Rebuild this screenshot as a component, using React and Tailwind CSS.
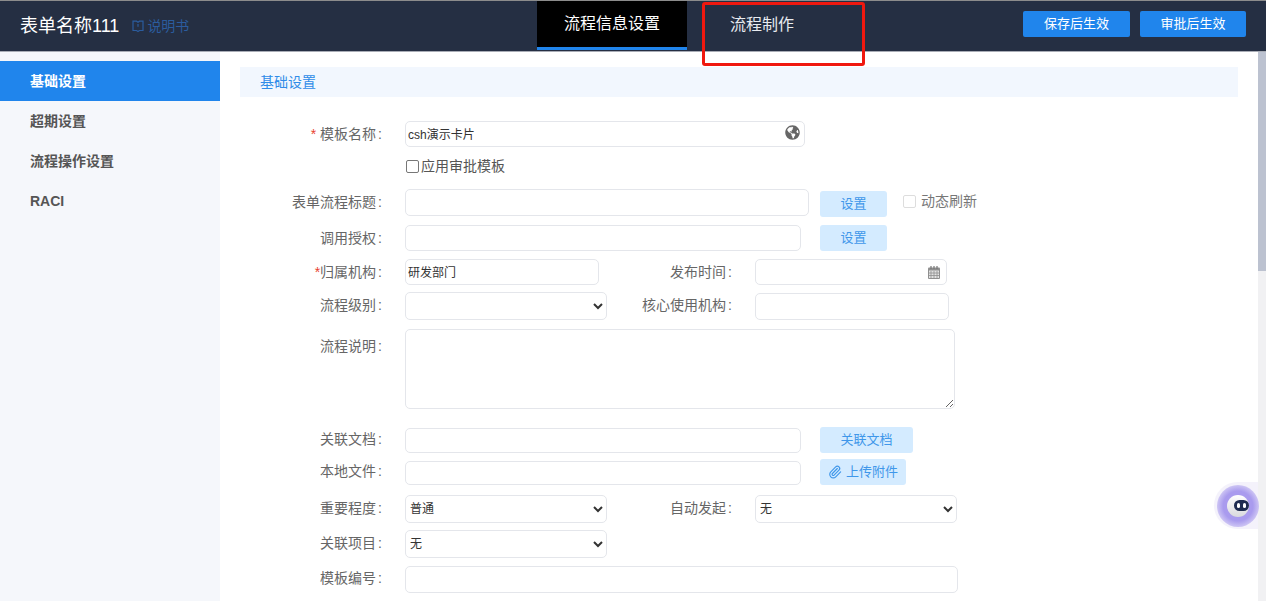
import { Paperclip } from "lucide-react";
import { FaGlobeAmericas } from "react-icons/fa";

const sideItems = ["基础设置", "超期设置", "流程操作设置", "RACI"];

const boxCls =
  "block rounded-[5px] border border-[#e4e6eb] bg-white text-xs text-[#333] outline-none";

function Label({ children, required, className = "w-[142px]" }) {
  return (
    <label className={`${className} shrink-0 text-right text-sm leading-[26px] text-[#666]`}>
      {required && <span className="mr-1 text-[#e8412f]">*</span>}
      {children}
      <span className="ml-[2px]">:</span>
    </label>
  );
}

function Field({ w, h = "h-[26px]", value = "" }) {
  return <input readOnly value={value} className={`${boxCls} ${w} ${h} px-[2px] pb-px`} />;
}

function Pick({ w, value = "" }) {
  return (
    <select defaultValue={value} className={`${boxCls} ${w} h-[28px] px-0`}>
      <option value={value}>{value}</option>
    </select>
  );
}

function LightBtn({ w, children }) {
  return (
    <button className={`${w} flex h-[26px] items-center justify-center gap-1 rounded-[3px] bg-[#d4ebff] text-[13px] text-[#3f97ea]`}>
      {children}
    </button>
  );
}

function BookIcon() {
  return (
    <svg width="14" height="14" viewBox="0 0 14 14" fill="none" stroke="#2b5c9e" strokeWidth="1.2">
      <path d="M2 2.2h3.5L7 3.2l1.5-1H12v9.3H8.5L7 12.5l-1.5-1H2z" />
      <path d="M7 5v2.8" />
    </svg>
  );
}

function CalendarIcon() {
  return (
    <svg width="12" height="13" viewBox="0 0 12 13" className="absolute right-[7px] top-[7px]">
      <rect x="0" y="1.5" width="12" height="11.5" rx="1" fill="#8f8f8f" />
      <rect x="1" y="4.5" width="10" height="7.5" fill="#e2e2e2" />
      <path d="M3 0v3M6 0v3M9 0v3" stroke="#777" strokeWidth="1.2" />
      <path d="M3 5v7M6 5v7M9 5v7M1 7h10M1 9.5h10" stroke="#8f8f8f" strokeWidth="0.8" />
    </svg>
  );
}

function Robot() {
  return (
    <div className="absolute left-[1214px] top-[482px] flex h-[47px] w-[44px] items-center rounded-l-full bg-[#f4f2fb]">
      <div className="ml-[3px] flex h-[42px] w-[42px] shrink-0 items-center justify-center rounded-full bg-[radial-gradient(circle,#a99bee_50%,#d5cef5_75%,#f0edfb_100%)]">
        <div className="flex h-[22px] w-[22px] items-center justify-end rounded-full bg-[linear-gradient(#ffffff,#d9d9de)]">
          <div className="flex h-[11px] w-[15px] items-center justify-center gap-[3px] rounded-full bg-[#1f2c50]">
            <span className="h-[5px] w-[3px] rounded-full bg-white" />
            <span className="h-[5px] w-[3px] rounded-full bg-white" />
          </div>
        </div>
      </div>
    </div>
  );
}

export default function App() {
  return (
    <div className="relative flex h-[601px] flex-col overflow-hidden bg-white font-['Liberation_Sans','Noto_Sans_CJK_SC',sans-serif]">
      <header className="flex h-[52px] shrink-0 border-y border-t-[#8c8c8c] border-b-[#a9adb6] bg-[#252f43]">
        <div className="flex w-[537px] shrink-0 items-center pl-5">
          <span className="text-lg text-white">表单名称111</span>
          <span className="ml-3 flex items-center gap-[2px] text-sm text-[#2b5c9e]">
            <BookIcon />
            说明书
          </span>
        </div>
        <div className="flex h-[49px] w-[150px] items-center justify-center border-b-[3px] border-[#2085ec] bg-black text-base text-white">
          流程信息设置
        </div>
        <div className="ml-[43px] flex h-[47px] items-center text-base text-[#e8ebf0]">流程制作</div>
        <div className="ml-auto flex gap-[10px] pr-5 pt-[10px]">
          <button className="h-[26px] w-[107px] rounded-[2px] bg-[#2085ec] text-[13px] text-white">保存后生效</button>
          <button className="h-[26px] w-[106px] rounded-[2px] bg-[#2085ec] text-[13px] text-white">审批后生效</button>
        </div>
      </header>

      <div className="flex min-h-0 flex-1">
        <aside className="w-[220px] shrink-0 bg-[#f5f7fb] pt-[9px]">
          {sideItems.map((item, i) => (
            <div
              key={item}
              className={`flex h-10 items-center pl-[30px] text-sm font-bold ${i === 0 ? "bg-[#2085ec] text-white" : "text-[#555]"}`}
            >
              {item}
            </div>
          ))}
        </aside>

        <main className="min-w-0 flex-1 overflow-hidden pl-5 pr-5 pt-[15px]">
          <div className="flex h-[30px] items-center bg-[#f2f7fe] pl-5 text-sm text-[#2f8ce8]">基础设置</div>

          <div className="mt-6 flex items-start gap-[23px]">
            <Label required>模板名称</Label>
            <div className="relative">
              <Field w="w-[400px]" value="csh演示卡片" />
              <FaGlobeAmericas className="absolute right-[5px] top-[4px] text-[15px] text-[#666]" />
            </div>
          </div>

          <div className="mt-[9px] flex h-[20px] items-center gap-[2px] pl-[166px] text-sm text-[#555]">
            <input type="checkbox" readOnly className="h-[13px] w-[13px] appearance-none rounded-[2px] border border-[#777]" />
            应用审批模板
          </div>

          <div className="mt-[13px] flex items-start gap-[23px]">
            <Label>表单流程标题</Label>
            <Field w="w-[404px]" h="h-[27px]" />
            <div className="ml-[-12px] mt-[2px]">
              <LightBtn w="w-[67px]">设置</LightBtn>
            </div>
            <div className="ml-[-7px] -mt-px flex h-[26px] items-center gap-[5px] text-sm text-[#777]">
              <input type="checkbox" readOnly className="h-[13px] w-[13px] appearance-none rounded-[2px] border border-[#ddd]" />
              动态刷新
            </div>
          </div>

          <div className="mt-[8px] flex items-start gap-[23px]">
            <Label>调用授权</Label>
            <Field w="w-[396px]" />
            <div className="ml-[-4px]">
              <LightBtn w="w-[67px]">设置</LightBtn>
            </div>
          </div>

          <div className="mt-[8px] flex items-start gap-[23px]">
            <Label>
              <span className="text-[#e8412f]">*</span>归属机构
            </Label>
            <Field w="w-[194px]" value="研发部门" />
            <Label className="w-[110px]">发布时间</Label>
            <div className="relative">
              <Field w="w-[192px]" />
              <CalendarIcon />
            </div>
          </div>

          <div className="mt-[7px] flex items-start gap-[23px]">
            <Label>流程级别</Label>
            <Pick w="w-[202px]" />
            <Label className="w-[102px]">核心使用机构</Label>
            <div className="mt-px">
              <Field w="w-[194px]" h="h-[27px]" />
            </div>
          </div>

          <div className="mt-[9px] flex items-start gap-[23px]">
            <Label className="w-[142px] pt-1">流程说明</Label>
            <textarea readOnly className={`${boxCls} h-[80px] w-[550px]`} />
          </div>

          <div className="mt-[19px] flex items-start gap-[23px]">
            <Label className="w-[142px] -mt-[2px]">关联文档</Label>
            <Field w="w-[396px]" h="h-[25px]" />
            <div className="ml-[-4px] -mt-px">
              <LightBtn w="w-[93px]">关联文档</LightBtn>
            </div>
          </div>

          <div className="mt-[8px] flex items-start gap-[23px]">
            <Label className="w-[142px] -mt-[3px]">本地文件</Label>
            <Field w="w-[396px]" h="h-[24px]" />
            <div className="ml-[-4px] -mt-[2px]">
              <LightBtn w="w-[86px]">
                <Paperclip size={14} />
                上传附件
              </LightBtn>
            </div>
          </div>

          <div className="mt-[10px] flex items-start gap-[23px]">
            <Label>重要程度</Label>
            <Pick w="w-[202px]" value="普通" />
            <Label className="w-[102px]">自动发起</Label>
            <Pick w="w-[202px]" value="无" />
          </div>

          <div className="mt-[7px] flex items-start gap-[23px]">
            <Label>关联项目</Label>
            <Pick w="w-[202px]" value="无" />
          </div>

          <div className="mt-[8px] flex items-start gap-[23px]">
            <Label className="w-[142px] -mt-px">模板编号</Label>
            <Field w="w-[553px]" h="h-[27px]" />
          </div>
        </main>

        <div className="w-2 shrink-0 bg-[#f1f1f3]">
          <div className="h-[219px] bg-[#bcc2d0]" />
        </div>
      </div>

      <div className="absolute left-[702px] top-[2px] h-[64px] w-[163px] rounded-[3px] border-[3px] border-[#f0180f]" />
      <Robot />
    </div>
  );
}
